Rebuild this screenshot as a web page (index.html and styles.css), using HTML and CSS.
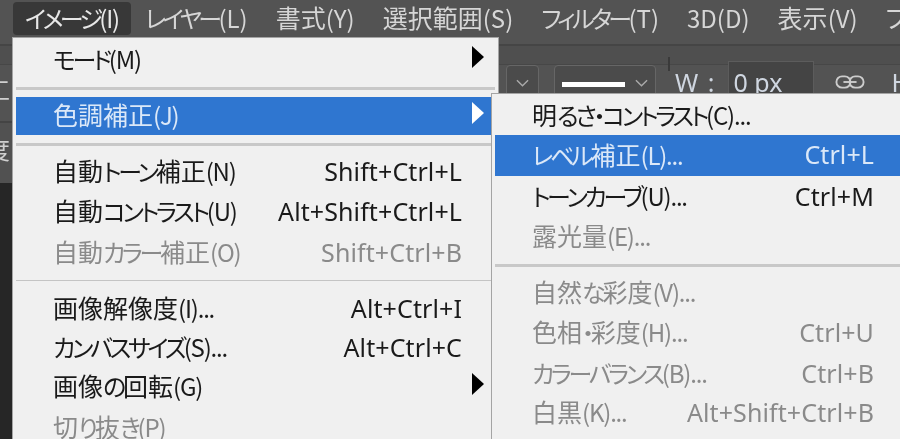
FILE: index.html
```html
<!DOCTYPE html>
<html lang="ja">
<head>
<meta charset="utf-8">
<title>イメージ メニュー</title>
<link rel="stylesheet" href="styles.css">
</head>
<body>
<div class="app">
  <nav class="menubar">
    <span class="top top-active"><span class="kn">イメージ</span><span class="la">(I)</span></span>
    <span class="top"><span class="kn">レイヤー</span><span class="la">(L)</span></span>
    <span class="top">書式<span class="la">(Y)</span></span>
    <span class="top">選択範囲<span class="la">(S)</span></span>
    <span class="top"><span class="kn">フィルター</span><span class="la">(T)</span></span>
    <span class="top"><span class="la">3D(D)</span></span>
    <span class="top">表示<span class="la">(V)</span></span>
    <span class="top">フ</span>
  </nav>
  <div class="band"></div>
  <div class="options">
    <span class="stub">工</span>
    <div class="controls">
      <span class="select select-a"><svg class="chev" viewBox="0 0 14 8"><path d="M1 1l6 6 6-6"/></svg></span>
      <span class="select select-b"><span class="line"></span><svg class="chev" viewBox="0 0 14 8"><path d="M1 1l6 6 6-6"/></svg></span>
      <span class="vsep"></span>
      <span class="w-label">W :</span>
      <span class="field">0 px</span>
      <svg class="link" viewBox="0 0 32 16"><rect x="1.5" y="2" width="15" height="12" rx="6"/><rect x="15.5" y="2" width="15" height="12" rx="6"/><path d="M9 8h14"/></svg>
      <span class="h-label">H</span>
    </div>
  </div>
  <div class="stub-row"><span class="stub">度</span></div>
  <div class="dark"></div>

  <div class="menu menu-main">
    <div class="item"><span><span class="kn">モード</span><span class="la">(M)</span></span><i class="arrow"></i></div>
    <div class="sep after-group"></div>
    <div class="item sel"><span>色調補正<span class="la">(J)</span></span><i class="arrow arrow-w"></i></div>
    <div class="sep after-group"></div>
    <div class="item"><span>自動<span class="kn">トーン</span>補正<span class="la">(N)</span></span><span class="key">Shift+Ctrl+L</span></div>
    <div class="item gap-2"><span>自動<span class="kn">コントラスト</span><span class="la">(U)</span></span><span class="key">Alt+Shift+Ctrl+L</span></div>
    <div class="item gap-3 off"><span>自動<span class="kn">カラー</span>補正<span class="la">(O)</span></span><span class="key">Shift+Ctrl+B</span></div>
    <div class="sep sep-thin"></div>
    <div class="item"><span>画像解像度<span class="la">(I)...</span></span><span class="key">Alt+Ctrl+I</span></div>
    <div class="item gap-1"><span><span class="kn">カンバスサイズ</span><span class="la">(S)...</span></span><span class="key">Alt+Ctrl+C</span></div>
    <div class="item gap-1"><span>画像<span class="kn">の</span>回転<span class="la">(G)</span></span><i class="arrow"></i></div>
    <div class="item gap-3 off"><span>切<span class="kn">り</span>抜<span class="kn">き</span><span class="la">(P)</span></span></div>
  </div>

  <div class="menu menu-sub">
    <div class="item"><span>明<span class="kn">るさ・コントラスト</span><span class="la">(C)...</span></span></div>
    <div class="item sel sel-tall"><span><span class="kn">レベル</span>補正<span class="la">(L)...</span></span><span class="key">Ctrl+L</span></div>
    <div class="item gap-2"><span><span class="kn">トーンカーブ</span><span class="la">(U)...</span></span><span class="key">Ctrl+M</span></div>
    <div class="item gap-2 off"><span>露光量<span class="la">(E)...</span></span></div>
    <div class="sep after-group"></div>
    <div class="item off"><span>自然<span class="kn">な</span>彩度<span class="la">(V)...</span></span></div>
    <div class="item gap-2 off"><span>色相<span class="kn">・</span>彩度<span class="la">(H)...</span></span><span class="key">Ctrl+U</span></div>
    <div class="item gap-3 off"><span><span class="kn">カラーバランス</span><span class="la">(B)...</span></span><span class="key">Ctrl+B</span></div>
    <div class="item gap-1 off"><span>白黒<span class="la">(K)...</span></span><span class="key">Alt+Shift+Ctrl+B</span></div>
  </div>
</div>
</body>
</html>
```
FILE: styles.css
```css
* { box-sizing: border-box; }
html, body { margin: 0; padding: 0; }
body {
  width: 900px;
  height: 439px;
  overflow: hidden;
  background: #262626;
  font-family: "Noto Sans CJK JP", "Noto Sans", sans-serif;
  font-feature-settings: "palt";
}
.app {
  position: relative;
  width: 900px;
  height: 439px;
  overflow: hidden;
  display: flex;
  flex-direction: column;
  filter: blur(0.45px);
}
.kn { font-size: 24px; letter-spacing: -3.2px; }
.la { font-size: 24px; letter-spacing: -1.2px; }

.menubar {
  height: 46px;
  flex: none;
  background: #535353;
  display: flex;
  align-items: flex-start;
  padding: 2px 0 0 13px;
  gap: 4px;
  white-space: nowrap;
  border-bottom: 2px solid #454545;
  color: #d6d6d6;
  font-size: 25px;
}
.top { height: 33px; padding: 0 12px; line-height: 31px; border-radius: 4px; }
.top .kn { letter-spacing: -3.6px; }
.top .la { letter-spacing: 0; }
.top-active { margin-right: -2px; background: #383838; color: #e8e8e8; }
.top-active .la { letter-spacing: -1.2px; }
.band { height: 19px; flex: none; background: #4f4f4f; border-bottom: 1px solid #474747; }
.options {
  height: 58px;
  flex: none;
  background: #535353;
  border-bottom: 2px solid #444;
  display: flex;
  color: #cfcfcf;
  font-size: 24px;
}
.stub { display: block; width: 12px; margin-left: -14px; flex: none; color: #d0d0d0; font-size: 24px; line-height: 48px; }
.options .stub { margin-right: 2px; }
.controls { margin-left: 506px; display: flex; align-items: flex-start; color: #cfd6e0; }
.stub-row { height: 60px; flex: none; background: #515151; }
.stub-row .stub { line-height: 52px; }
.dark { flex: 1; background: #262626; }

.menu {
  position: absolute;
  background: #f0f0f0;
  border: 1px solid #a4a4a4;
  color: #1a1a1a;
  font-size: 25px;
  padding: 3px;
}
.menu-main { left: 12px; top: 37px; width: 487px; height: 420px; }
.menu-sub { left: 491px; top: 93px; width: 420px; height: 360px; }
.item {
  height: 38px;
  flex: none;
  display: flex;
  justify-content: space-between;
  align-items: center;
  padding: 0 33px 3px 37px;
  line-height: 34px;
  white-space: nowrap;
}
.gap-1 { margin-top: 1px; }
.gap-2 { margin-top: 2px; }
.gap-3 { margin-top: 3px; }
.off { color: #8a8a8a; }
.sel { background: #2f76d0; color: #dbe8f8; }
.sel-tall { height: 41px; }
.key { font-family: "Noto Sans", sans-serif; font-size: 25px; letter-spacing: .1px; }
.sep { height: 3px; background: #c8c8c8; }
.after-group { margin: 8px 0 7px; }
.sep-thin { height: 1px; margin: 8px 0 9px; background: #c4c4c4; }
.arrow {
  width: 0;
  height: 0;
  margin: -3px -22px 0 0;
  border-left: 12px solid #000;
  border-top: 11px solid transparent;
  border-bottom: 11px solid transparent;
}
.arrow-w { border-left-color: #fff; }

.select {
  display: inline-flex;
  align-items: center;
  height: 36px;
  border: 1px solid #666;
  border-radius: 4px;
  background: #4b4b4b;
}
.select-a { width: 33px; justify-content: center; margin-right: 15px; }
.select-b { width: 102px; padding: 0 7px; justify-content: space-between; }
.line { width: 63px; height: 5px; background: #fff; margin-top: 2px; }
.chev { width: 13px; height: 8px; fill: none; stroke: #aaa; stroke-width: 1.5; }
.vsep { width: 2px; height: 14px; margin: -8px 5px 0 12px; background: #3a3a3a; }
.w-label { margin: 0 14px 0 0; line-height: 34px; font-family: "Noto Sans", sans-serif; font-size: 25px; white-space: pre; word-spacing: 3px; }
.field {
  width: 86px;
  height: 44px;
  margin-top: -4px;
  padding-left: 4px;
  background: #444;
  border: 1px solid #5c5c5c;
  line-height: 40px;
  font-family: "Noto Sans", sans-serif;
  font-size: 25px;
}
.link { width: 30px; height: 16px; margin: 9px 26px 0 21px; flex: none; fill: none; stroke: #ccc; stroke-width: 2; }
.h-label { line-height: 34px; font-family: "Noto Sans", sans-serif; font-size: 25px; }
```
